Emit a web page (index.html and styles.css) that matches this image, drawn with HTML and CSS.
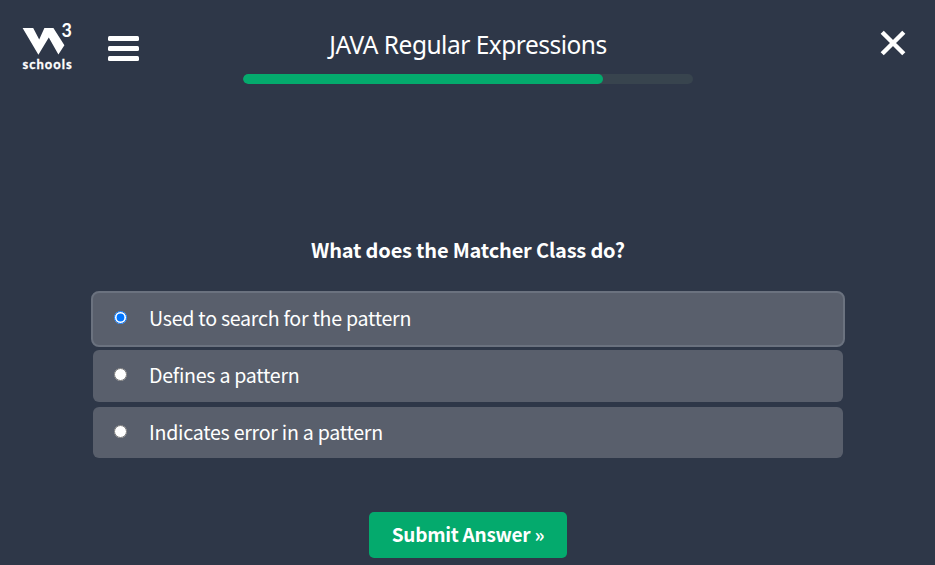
FILE: index.html
```html
<!DOCTYPE html>
<html lang="en">
<head>
<meta charset="utf-8">
<title>JAVA Regular Expressions</title>
<link rel="stylesheet" href="styles.css">
</head>
<body>
<header class="topbar">
  <div class="brand">
    <svg class="logo" width="56" height="52" viewBox="20 20 56 52" aria-label="W3Schools">
      <path class="mark" d="M22.6 28H33.2L39.2 39.4L44.4 28H53.4L64.4 45.2L58.4 54.6L48.8 37.4L38.4 54.8Z"/>
      <text class="logo-three" x="61.4" y="37" textLength="10.4" lengthAdjust="spacingAndGlyphs">3</text>
      <text class="logo-name" x="22.6" y="68.8" textLength="49" lengthAdjust="spacing">schools</text>
    </svg>
    <button class="menu" aria-label="Menu"><span></span><span></span><span></span></button>
  </div>
  <div class="heading">
    <h1>JAVA Regular Expressions</h1>
    <div class="progress"><div class="progress-value"></div></div>
  </div>
  <svg class="close" width="26" height="26" viewBox="0 0 26 26"><path d="M2.2 2.2L23.8 23.8M23.8 2.2L2.2 23.8"/></svg>
</header>
<main>
  <h2>What does the Matcher Class do?</h2>
  <form>
    <label class="answer selected"><input type="radio" name="answer" checked><span>Used to search for the pattern</span></label>
    <label class="answer"><input type="radio" name="answer"><span>Defines a pattern</span></label>
    <label class="answer last"><input type="radio" name="answer"><span>Indicates error in a pattern</span></label>
    <button class="submit" type="button">Submit Answer »</button>
  </form>
</main>
</body>
</html>
```
FILE: styles.css
```css
* { box-sizing: border-box; }
body {
  margin: 0;
  height: 565px;
  overflow: hidden;
  background: #2e3748;
  color: #fff;
  font-family: "Noto Sans CJK SC", sans-serif;
}
h1, h2 { margin: 0; white-space: nowrap; }
button { border: 0; padding: 0; color: inherit; font-family: inherit; }
.topbar {
  display: grid;
  grid-template-columns: 243px 450px 1fr;
  height: 84px;
}
.brand { display: flex; padding: 20px 0 0 20px; }
.logo { display: block; }
.mark { fill: #fff; }
.logo-three { fill: #fff; font: 700 18.5px Lato, sans-serif; }
.logo-name { fill: #fff; font: 700 13px Lato, sans-serif; stroke: #fff; stroke-width: 0.3px; }
.menu {
  display: flex;
  flex-direction: column;
  gap: 5px;
  width: 31px;
  margin: 16px 0 0 32px;
  height: 25px;
  background: none;
}
.menu span { width: 31px; height: 5px; border-radius: 1.5px; background: #fff; }
.heading { padding-top: 24px; }
h1 {
  height: 50px;
  font: 400 24.5px/41px "Noto Sans", sans-serif;
  letter-spacing: -0.5px;
  text-align: center;
}
.progress { height: 10px; border-radius: 5px; background: #38444e; overflow: hidden; }
.progress-value { width: 80%; height: 10px; border-radius: 5px; background: #04aa6d; }
.close { margin: 30px 29px 0 auto; }
.close path { stroke: #fff; stroke-width: 4.4; fill: none; }
main { padding: 149px 91px 0; }
h2 { height: 58px; padding-left: 1px; font-size: 20px; line-height: 34px; font-weight: 700; letter-spacing: -0.19px; text-align: center; }
form { display: flex; flex-direction: column; }
.answer {
  display: flex;
  align-items: center;
  height: 52px;
  margin: 3px 1px 0 2px;
  width: 750px;
  padding-left: 21px;
  border-radius: 6px;
  background: #595f6c;
  font-size: 19.6px;
  line-height: 30px;
  letter-spacing: -0.26px;
  white-space: nowrap;
}
.answer.selected {
  width: 754px;
  height: 56px;
  margin: 0;
  border: 2px solid #6b727f;
  border-radius: 8px;
}
.answer.last { margin-top: 5px; height: 51px; }
.answer input { width: 13px; height: 13px; margin: 0 22px 3px 0; }
.answer span { padding-bottom: 2px; }
.submit {
  align-self: flex-start;
  width: 198px;
  height: 46px;
  margin: 54px 0 0 278px;
  padding-bottom: 2px;
  border-radius: 5px;
  background: #04aa6d;
  font-size: 19px;
  font-weight: 700;
  line-height: 44px;
  letter-spacing: -0.25px;
}
```
